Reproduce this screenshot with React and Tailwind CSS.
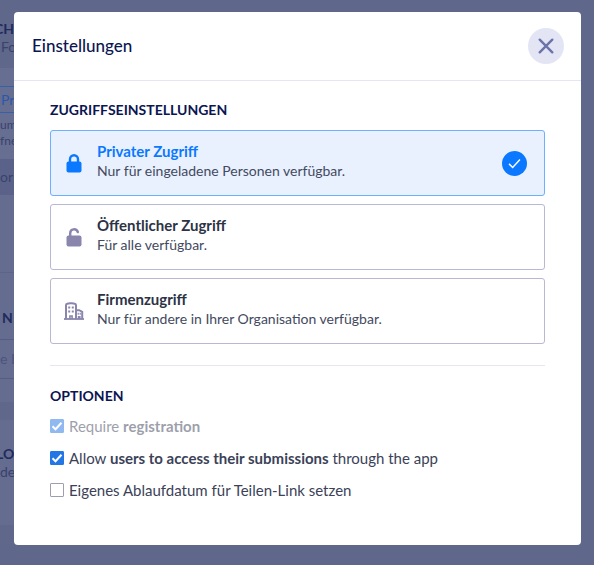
import React, { useState } from 'react';

const LockIcon = () => (
  <svg viewBox="0 0 16 19" className="w-4 h-[19px]" fill="none">
    <rect x="0.5" y="7.5" width="15" height="11" rx="2" fill="currentColor" />
    <path d="M4 8.5V5.2a4 4 0 0 1 8 0v3.3" stroke="currentColor" strokeWidth="2.4" />
  </svg>
);

const UnlockIcon = () => (
  <svg viewBox="0 0 16 19" className="w-4 h-[19px]" fill="none">
    <rect x="0.5" y="7.5" width="15" height="11" rx="2" fill="currentColor" />
    <path d="M4.2 8.5V5.2a3.9 3.9 0 0 1 7.6-1.2" stroke="currentColor" strokeWidth="2.4" strokeLinecap="round" />
  </svg>
);

const CompanyIcon = () => (
  <svg viewBox="0 0 20 18" className="w-5 h-[18px]" fill="none" stroke="currentColor">
    <path d="M0 17h20" strokeWidth="1.8" />
    <path d="M2 17V3.2Q2 2 3.2 1.8L6 1.2h2l2.8.6Q12 2 12 3.2V17M12 8.2h3.2L18.2 9.8V17" strokeWidth="2" />
    <path d="M5.9 17v-3h2.2v3M14.6 17v-2.2h1.2V17" strokeWidth="1.6" />
    <path d="M4.2 5.5h2M7.8 5.5h2M4.2 9.5h2M7.8 9.5h2M13.6 11.8h1.2M15.6 11.8h1.2" strokeWidth="2" />
  </svg>
);

const CheckIcon = ({ className, strokeWidth }) => (
  <svg viewBox="0 0 14 14" className={className} fill="none" stroke="currentColor" strokeWidth={strokeWidth}>
    <path d="M2.5 7.3l3 3 6-6.5" />
  </svg>
);

const accessModes = [
  { id: 'private', title: 'Privater Zugriff', text: 'Nur für eingeladene Personen verfügbar.', icon: LockIcon },
  { id: 'public', title: 'Öffentlicher Zugriff', text: 'Für alle verfügbar.', icon: UnlockIcon },
  { id: 'company', title: 'Firmenzugriff', text: 'Nur für andere in Ihrer Organisation verfügbar.', icon: CompanyIcon }
];

const AccessCard = ({ mode, selected, onSelect }) => {
  const Icon = mode.icon;
  return (
    <label
      className={`relative flex items-center gap-[13px] pl-[13px] pr-[17px] border rounded-[3px] cursor-pointer ${
        selected ? 'border-[#6cb0ff] bg-[#e9f1ff]' : 'border-[#b9b8d1] bg-white'
      }`}
    >
      <input
        type="radio"
        name="access"
        checked={selected}
        onChange={() => onSelect(mode.id)}
        className="sr-only"
      />
      <span className={`flex w-5 justify-center ${selected ? 'text-[#0a78ff]' : 'text-[#8985ad]'}`}>
        <Icon />
      </span>
      <span className="flex-1 pt-2.5 pb-3.5 leading-5">
        <span className={`block text-[15px] font-bold ${selected ? 'text-[#0a78ff]' : 'text-[#2c3345]'}`}>
          {mode.title}
        </span>
        <span className="block text-sm text-[#434a60]">{mode.text}</span>
      </span>
      {selected && (
        <span className="flex w-[25px] h-[25px] items-center justify-center rounded-full bg-[#0a78ff] text-white">
          <CheckIcon className="w-[17px] h-[17px]" strokeWidth="1.2" />
        </span>
      )}
    </label>
  );
};

const OptionRow = ({ checked, disabled, onChange, children }) => (
  <label className={`flex items-center gap-[5px] text-[15px] leading-5 text-[#3b4258] ${disabled ? 'opacity-50' : ''}`}>
    <span className="grid">
      <input
        type="checkbox"
        checked={checked}
        disabled={disabled}
        onChange={(e) => onChange(e.target.checked)}
        className="[grid-area:1/1] w-3.5 h-3.5 appearance-none rounded-[1px] border border-[#9c9eb4] bg-white checked:border-[#2376e5] checked:bg-[#2376e5]"
      />
      {checked && (
        <CheckIcon className="[grid-area:1/1] w-3.5 h-3.5 text-white pointer-events-none" strokeWidth="2" />
      )}
    </span>
    <span>{children}</span>
  </label>
);

// Dimmed share page that stays visible around the dialog
const Backdrop = () => (
  <div
    className="min-h-screen overflow-hidden bg-[#5f678b] text-sm leading-[18px] text-[#39426c] whitespace-nowrap"
    aria-hidden="true"
  >
    <div className="w-1/3">
      <div className="pt-5 pb-3">
        <p className="-ml-1.5 font-bold text-[#202a5c]">CH</p>
        <p className="pl-px">Fo</p>
      </div>
      <div className="pt-[18px] pb-2.5 bg-[#666e92]">
        <p className="mb-1 pl-px border-y border-[#3560ab] leading-[25px] text-[#2b58a8]">Pri</p>
        <p className="text-xs leading-4">um</p>
        <p className="text-xs leading-4">fne</p>
      </div>
      <p className="bg-[#5b628a] leading-9">or</p>
      <div className="h-[78px] border-b border-[#5c648a] bg-[#646c90]" />
      <div className="pt-9 pb-[23px] bg-[#646c90]">
        <p className="mb-3 pl-0.5 font-bold text-[#202a5c]">N</p>
        <p className="border-y border-[#555d84] leading-[38px] text-[#4c5480]">e E</p>
      </div>
      <div className="mt-[18px] pt-[25px] pb-11 bg-[#646c90]">
        <p className="-ml-1 font-bold text-[#202a5c]">LO</p>
        <p>de</p>
      </div>
    </div>
  </div>
);

const App = () => {
  const [mode, setMode] = useState('private');
  const [allowAccess, setAllowAccess] = useState(true);
  const [expiry, setExpiry] = useState(false);

  return (
    <div className="font-['Lato','Liberation_Sans',sans-serif]">
      <Backdrop />

      <div className="fixed inset-0 pt-3 pb-5 pl-3.5 pr-[13px] overflow-y-auto">
        <div role="dialog" aria-labelledby="settings-title" className="rounded bg-white">
          {/* Header */}
          <div className="flex items-center justify-between py-4 pl-[18px] pr-[17px] border-b border-[#e5e5f3]">
            <h1 id="settings-title" className="text-[17px] leading-6 font-medium text-[#0a1551]">Einstellungen</h1>
            <button
              type="button"
              aria-label="Schließen"
              className="flex w-9 h-9 items-center justify-center rounded-full bg-[#e3e5f5] text-[#6c73a8]"
            >
              <svg viewBox="0 0 16 16" className="w-4 h-4" stroke="currentColor" strokeWidth="2.4" strokeLinecap="round">
                <path d="M1.7 1.7l12.6 12.6M14.3 1.7L1.7 14.3" />
              </svg>
            </button>
          </div>

          <div className="px-9 pt-[19px] pb-[45px]">
            {/* Access */}
            <h2 className="text-sm leading-5 font-bold text-[#0a1551]">ZUGRIFFSEINSTELLUNGEN</h2>
            <div className="grid gap-2 mt-2.5 pb-[21px] border-b border-[#e5e5f3]">
              {accessModes.map((item) => (
                <AccessCard key={item.id} mode={item} selected={mode === item.id} onSelect={setMode} />
              ))}
            </div>

            {/* Options */}
            <h2 className="mt-5 text-sm leading-5 font-bold text-[#0a1551]">OPTIONEN</h2>
            <div className="grid justify-items-start gap-3 mt-2.5">
              <OptionRow checked disabled onChange={() => {}}>
                Require <b>registration</b>
              </OptionRow>
              <OptionRow checked={allowAccess} onChange={setAllowAccess}>
                Allow <b>users to access their submissions</b> through the app
              </OptionRow>
              <OptionRow checked={expiry} onChange={setExpiry}>
                Eigenes Ablaufdatum für Teilen-Link setzen
              </OptionRow>
            </div>
          </div>
        </div>
      </div>
    </div>
  );
};

export default App;
